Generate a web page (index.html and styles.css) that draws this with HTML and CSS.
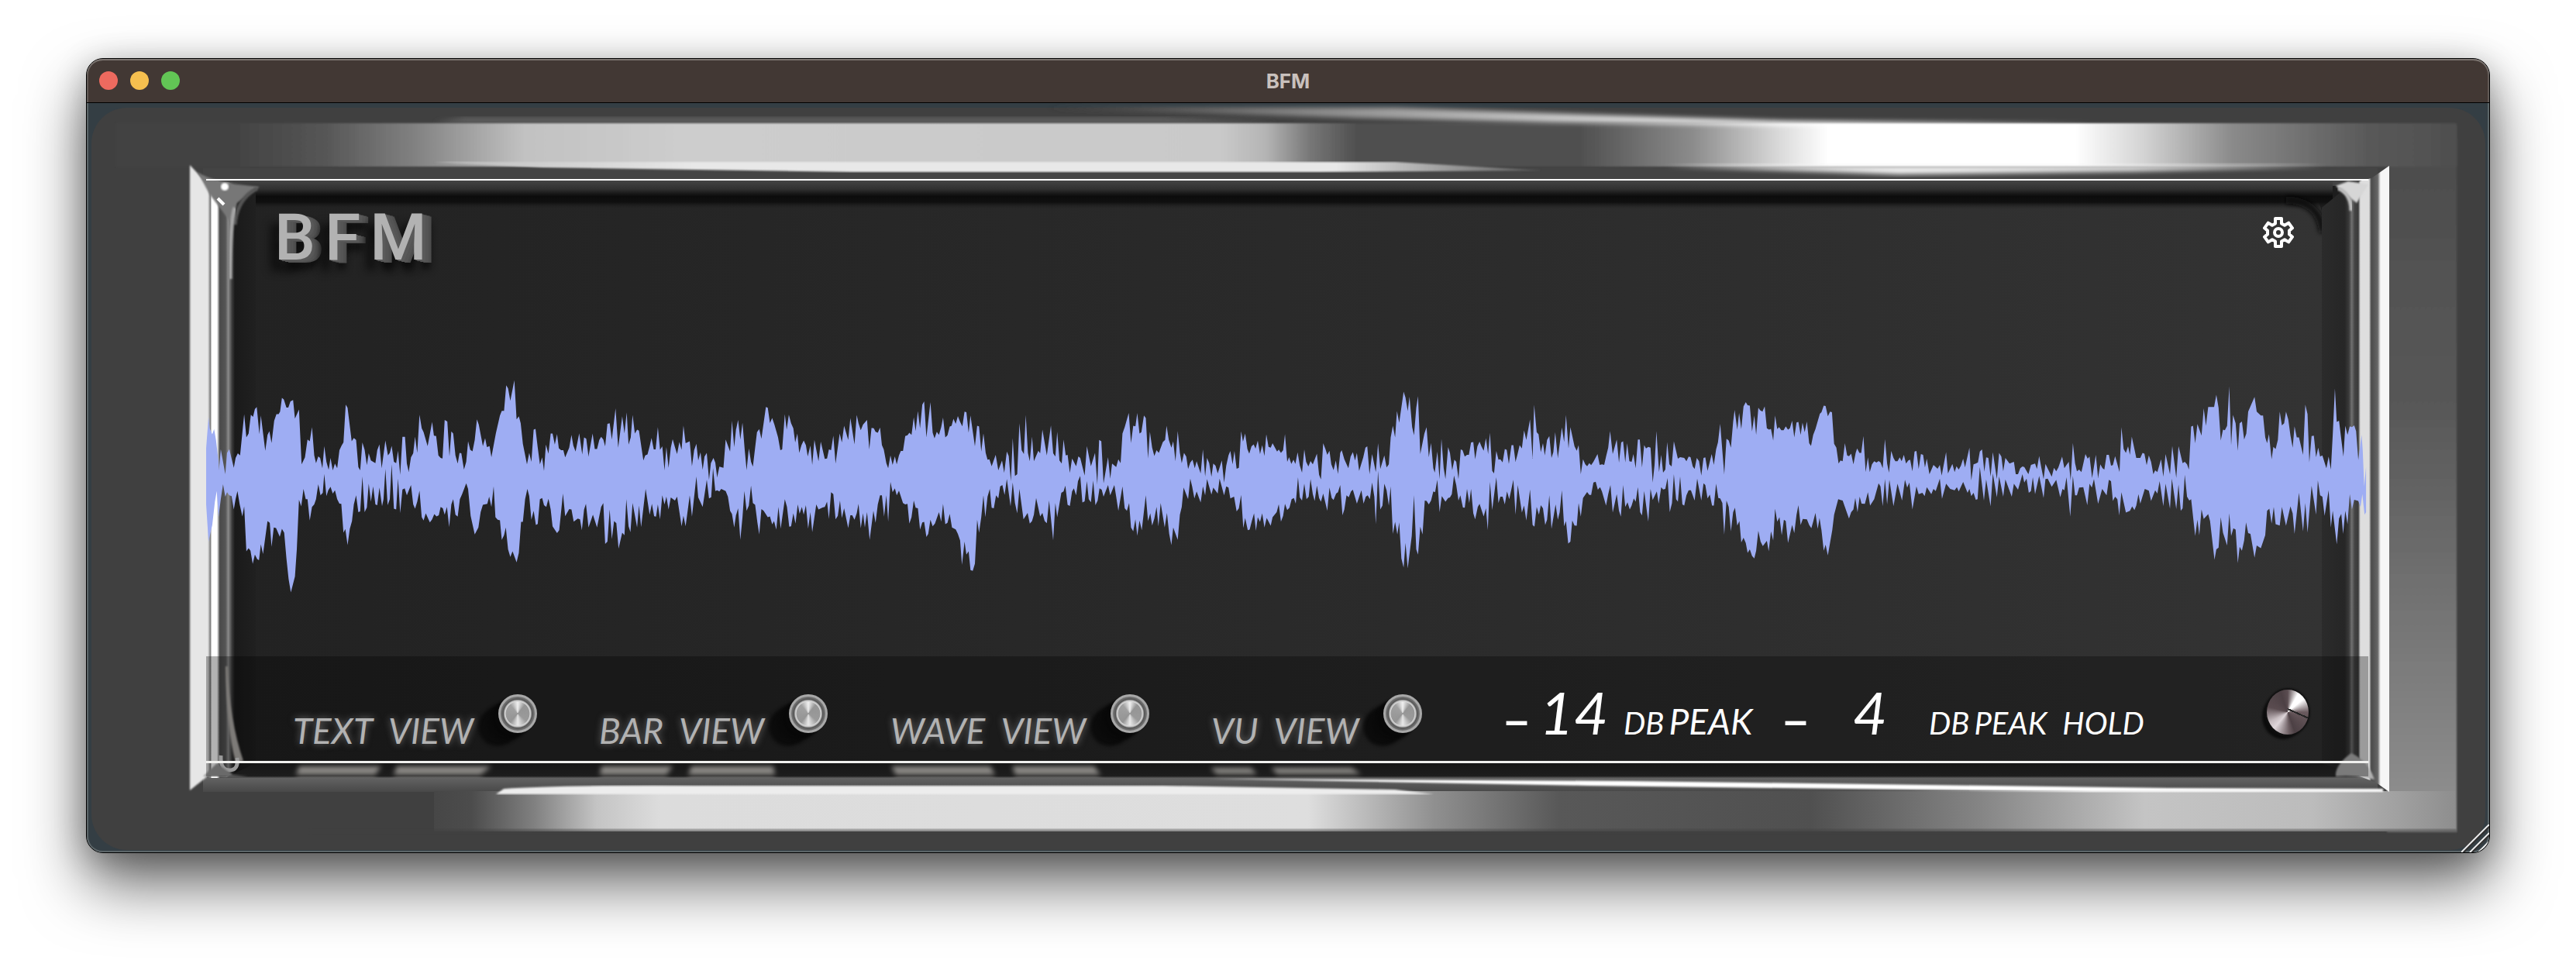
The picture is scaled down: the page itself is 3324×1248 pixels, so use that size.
FILE: index.html
```html
<!DOCTYPE html>
<html lang="en">
<head>
<meta charset="utf-8">
<title>BFM</title>
<link rel="stylesheet" href="styles.css">
</head>
<body>
<main class="window">
  <header class="titlebar">
    <div class="lights">
      <button class="light close" aria-label="Close"></button>
      <button class="light minimise" aria-label="Minimise"></button>
      <button class="light zoom" aria-label="Zoom"></button>
    </div>
    <h1 class="title">BFM</h1>
  </header>

  <div class="body">
    <svg class="bezel" viewBox="112 133 3100 967" preserveAspectRatio="none" aria-hidden="true">
      <defs>
        <linearGradient id="top" gradientUnits="userSpaceOnUse" x1="300" y1="0" x2="3200" y2="0">
          <stop offset="0" stop-color="#424242"/><stop offset=".04" stop-color="#555"/><stop offset=".08" stop-color="#808080"/>
          <stop offset=".13" stop-color="#c2c2c2"/><stop offset=".2" stop-color="#cdcdcd"/><stop offset=".44" stop-color="#c9c9c9"/>
          <stop offset=".46" stop-color="#b4b4b4"/><stop offset=".48" stop-color="#767676"/><stop offset=".5" stop-color="#505050"/>
          <stop offset=".6" stop-color="#505050"/><stop offset=".65" stop-color="#8c8c8c"/><stop offset=".69" stop-color="#ddd"/>
          <stop offset=".71" stop-color="#fff"/><stop offset=".82" stop-color="#fff"/><stop offset=".85" stop-color="#d4d4d4"/>
          <stop offset=".89" stop-color="#8a8a8a"/><stop offset=".95" stop-color="#595959"/><stop offset="1" stop-color="#4c4c4c"/>
        </linearGradient>
        <linearGradient id="bottom" gradientUnits="userSpaceOnUse" x1="500" y1="0" x2="3200" y2="0">
          <stop offset="0" stop-color="#404040"/><stop offset=".04" stop-color="#4c4c4c"/><stop offset=".07" stop-color="#808080"/>
          <stop offset=".1" stop-color="#c4c4c4"/><stop offset=".13" stop-color="#dcdcdc"/><stop offset=".44" stop-color="#dedede"/>
          <stop offset=".5" stop-color="#909090"/><stop offset=".56" stop-color="#585858"/><stop offset=".68" stop-color="#505050"/>
          <stop offset=".76" stop-color="#848484"/><stop offset=".84" stop-color="#c4c4c4"/><stop offset=".92" stop-color="#bcbcbc"/>
          <stop offset="1" stop-color="#868686"/>
        </linearGradient>
        <linearGradient id="side" x1="0" y1="0" x2="0" y2="1">
          <stop offset="0" stop-color="#4c4c4c"/><stop offset=".4" stop-color="#585858"/><stop offset="1" stop-color="#929292"/>
        </linearGradient>
        <linearGradient id="glass" x1="0" y1="0" x2="1" y2="0">
          <stop offset="0" stop-color="#222"/><stop offset=".5" stop-color="#2a2a2a"/><stop offset="1" stop-color="#333"/>
        </linearGradient>
        <linearGradient id="gutter" gradientUnits="userSpaceOnUse" x1="269" y1="0" x2="330" y2="0">
          <stop offset="0" stop-color="#666"/><stop offset=".04" stop-color="#777"/><stop offset=".07" stop-color="#fff"/>
          <stop offset=".18" stop-color="#fff"/><stop offset=".24" stop-color="#4a4a4a"/><stop offset=".36" stop-color="#555"/>
          <stop offset=".42" stop-color="#8a8a8a"/><stop offset=".5" stop-color="#3a3a3a"/><stop offset=".56" stop-color="#1a1a1a"/>
          <stop offset="1" stop-color="#202020"/>
        </linearGradient>
        <linearGradient id="gutterRight" gradientUnits="userSpaceOnUse" x1="2990" y1="0" x2="3083" y2="0">
          <stop offset="0" stop-color="#2c2c2c"/><stop offset=".38" stop-color="#262626"/><stop offset=".44" stop-color="#3a3a3a"/>
          <stop offset=".48" stop-color="#707070"/><stop offset=".52" stop-color="#444"/><stop offset=".57" stop-color="#3a3a3a"/>
          <stop offset=".6" stop-color="#dedede"/><stop offset=".72" stop-color="#dedede"/><stop offset=".75" stop-color="#4a4a4a"/>
          <stop offset=".84" stop-color="#666"/><stop offset=".88" stop-color="#f6f6f6"/><stop offset="1" stop-color="#f6f6f6"/>
        </linearGradient>
        <linearGradient id="lip" gradientUnits="userSpaceOnUse" x1="0" y1="233" x2="0" y2="270">
          <stop offset="0" stop-color="#444"/><stop offset=".3" stop-color="#303030"/><stop offset=".46" stop-color="#181818"/>
          <stop offset=".55" stop-color="#0c0c0c"/><stop offset=".76" stop-color="#101010"/><stop offset="1" stop-color="#242424" stop-opacity="0"/>
        </linearGradient>
        <linearGradient id="streak" gradientUnits="userSpaceOnUse" x1="1350" y1="0" x2="2300" y2="0">
          <stop offset="0" stop-color="#404040"/><stop offset=".35" stop-color="#888"/><stop offset=".8" stop-color="#ddd"/><stop offset="1" stop-color="#fff"/>
        </linearGradient>
        <linearGradient id="sheen" gradientUnits="userSpaceOnUse" x1="620" y1="0" x2="2000" y2="0">
          <stop offset="0" stop-color="#c4c4c4"/><stop offset=".2" stop-color="#e8e8e8"/><stop offset=".8" stop-color="#e8e8e8"/><stop offset="1" stop-color="#555"/>
        </linearGradient>
        <linearGradient id="sill" x1="0" y1="0" x2="0" y2="1">
          <stop offset="0" stop-color="#1f1f1f"/><stop offset=".5" stop-color="#2b2b2b"/><stop offset=".56" stop-color="#626262"/>
          <stop offset="1" stop-color="#484848"/>
        </linearGradient>
        <filter id="soft" x="-5%" y="-30%" width="110%" height="160%"><feGaussianBlur stdDeviation="3"/></filter>
        <filter id="edge" x="-5%" y="-5%" width="110%" height="110%"><feGaussianBlur stdDeviation="1"/></filter>
      </defs>

      <rect x="118" y="139" width="3089" height="958" rx="46" fill="#404040"/>
      <rect x="3080" y="162" width="90" height="912" fill="url(#side)" filter="url(#edge)"/>
      <path d="M600 152H1500L1650 158H560Z" fill="#666" filter="url(#soft)"/>
      <path d="M150 159H3170V215H150Z" fill="url(#top)" filter="url(#edge)"/>
      <path d="M1350 139H1800L2050 148L2300 156L2700 160L2300 162L2000 158L1750 152Z" fill="url(#streak)" filter="url(#soft)"/>

      <rect x="262" y="217" width="2806" height="22" fill="#444"/>
      <path d="M560 209H1800L1990 220L1700 222H1100L700 216Z" fill="url(#sheen)" filter="url(#edge)"/>
      <path d="M2150 214H3000L2750 221L2450 225Z" fill="#f4f4f4" filter="url(#soft)"/>
      <rect x="262" y="982" width="2806" height="40" fill="url(#sill)"/>
      <path d="M560 1021H3168V1073H560Z" fill="url(#bottom)"/>
      <rect x="400" y="1070" width="2770" height="6" fill="#404040" opacity=".5" filter="url(#edge)"/>

      <rect x="290" y="240" width="2750" height="745" fill="#1d1d1d"/>
      <path d="M303 985V290Q303 246 345 246H2966Q2998 250 2998 290V985Z" fill="url(#glass)"/>
      <rect x="300" y="234" width="2710" height="36" fill="url(#lip)"/>
      <path d="M2950 258Q2994 260 2997 300" fill="none" stroke="#101010" stroke-width="9" filter="url(#soft)"/>

      <path d="M650 1018Q720 1013 900 1014H1500L1800 1019L1850 1025H640Z" fill="#ededed" filter="url(#edge)"/>
      <path d="M1560 1005L2100 1008L2800 1017L3075 1018V1022L2700 1022L2050 1014Z" fill="#fff" filter="url(#edge)"/>

      <path d="M269 234H290L330 245V985L290 1004H269Z" fill="url(#gutter)"/>
      <path d="M3083 214L3060 230L3035 236L2996 268V985L3040 1000L3066 1010L3083 1022Z" fill="url(#gutterRight)"/>
      <path d="M245 213L270 240V1000L245 1020Z" fill="#e6e6e6" filter="url(#edge)"/>
      <path d="M255 222Q275 236 335 241L306 262L300 290L270 250Z" fill="#777" filter="url(#edge)"/>
      <path d="M332 243Q306 256 303 290" fill="none" stroke="#555" stroke-width="5" filter="url(#edge)"/>
      <circle cx="290" cy="241" r="5" fill="#fff" filter="url(#edge)"/>
      <path d="M281 256L289 264" stroke="#fff" stroke-width="4"/>
      <path d="M303 268Q297 284 297 360" fill="none" stroke="#a6a6a6" stroke-width="5" filter="url(#edge)"/>
      <path d="M294 860Q296 930 314 982L304 984Q292 940 291 860Z" fill="#b4b0ac" filter="url(#edge)"/>
      <path d="M285 975Q284 994 296 994Q308 994 306 978" fill="none" stroke="#ddd" stroke-width="5"/>
      <path d="M262 1002L280 985L300 1000L320 1002Z" fill="#999" filter="url(#edge)"/>

      <path d="M3014 240L3030 234L3056 238L3041 262Z" fill="#d6d6d6" filter="url(#edge)"/>
      <path d="M3017 243Q3034 250 3034 272" fill="none" stroke="#bbb" stroke-width="5" filter="url(#edge)"/>
      <path d="M3014 998Q3016 985 3034 972Q3056 982 3064 1006Q3040 1000 3014 1002Z" fill="#b0b0b0" filter="url(#edge)"/>

      <g fill="#c8c5c0" filter="url(#soft)">
        <path d="M386 989H492L484 1000H382Z"/><path d="M512 989H634L620 1000H508Z"/>
        <path d="M776 989H868L860 1000H774Z"/><path d="M892 989H998L1000 1000H888Z"/>
        <path d="M1150 989H1278L1284 1000H1156Z"/><path d="M1306 989H1412L1420 1000H1310Z"/>
        <path d="M1562 991H1614L1622 999H1570Z"/><path d="M1640 991H1744L1756 999H1648Z"/>
      </g>
    </svg>

    <section class="screen">
      <div class="display">
        <div class="brand"><span>B</span><span>F</span><span>M</span></div>
        <button class="settings" aria-label="Settings">
          <svg viewBox="0 0 40 40" class="gear" aria-hidden="true">
            <path d="M16 2H24V8.500L28 10.800L33.200 7.600L38 14.300L34 17.600V22.400L38 25.700L33.200 32.400L28 29.200L24 31.500V38H16V31.500L12 29.200L6.800 32.400L2 25.700L6 22.400V17.600L2 14.300L6.800 7.600L12 10.800L16 8.500Z"/>
            <circle cx="20" cy="20" r="5"/>
          </svg>
        </button>
      </div>
      <svg class="wave" viewBox="0 0 2790 771" preserveAspectRatio="none" role="img" aria-label="Waveform"></svg>
      <footer class="footer">
        <div class="controls">
          <button class="view"><span class="label"><span>TEXT</span><span>VIEW</span></span><span class="cap"></span></button>
          <button class="view"><span class="label"><span>BAR</span><span>VIEW</span></span><span class="cap"></span></button>
          <button class="view"><span class="label"><span>WAVE</span><span>VIEW</span></span><span class="cap"></span></button>
          <button class="view"><span class="label"><span>VU</span><span>VIEW</span></span><span class="cap"></span></button>
          <output class="reading"><span class="sign">–</span><span class="number">14</span><span class="unit">DB</span><span class="word">PEAK</span></output>
          <output class="reading hold"><span class="sign">–</span><span class="number">4</span><span class="unit">DB</span><span class="word">PEAK</span><span class="word last">HOLD</span></output>
          <button class="dial" aria-label="Gain"></button>
        </div>
      </footer>
    </section>

    <svg class="grip" viewBox="0 0 36 36" aria-hidden="true">
      <path d="M0 36L36 0M11 36L36 11M22 36L36 22" stroke="#eee" stroke-width="2"/>
      <path d="M3 36L36 3M14 36L36 14" stroke="#333" stroke-width="2"/>
    </svg>
  </div>
</main>
<script src="wave.js"></script>
</body>
</html>
```
FILE: styles.css
```css
* { box-sizing: border-box; }

body {
  margin: 0;
  min-height: 100vh;
  padding: 75px 111px 147px;
  background: #fff;
  font-family: Lato, "Liberation Sans", Arial, sans-serif;
  overflow: hidden;
}

button {
  padding: 0;
  border: 0;
  background: none;
  font: inherit;
  color: inherit;
}

.window {
  display: flex;
  flex-direction: column;
  min-height: calc(100vh - 222px);
  border: 1px solid #000;
  border-radius: 22px;
  background: #343e44;
  box-shadow: 0 40px 80px rgba(0, 0, 0, .6), 0 8px 40px rgba(0, 0, 0, .24);
}

.titlebar {
  display: grid;
  grid-template-columns: 1fr auto 1fr;
  align-items: center;
  height: 57px;
  padding: 0 16px;
  border-bottom: 1px solid #000;
  border-radius: 21px 21px 0 0;
  background: #423834;
  box-shadow: inset 0 2px 0 #7c7571, inset 2px 0 0 #625a56, inset -2px 0 0 #625a56;
}

.lights { display: flex; gap: 16px; }

.light {
  width: 24px;
  height: 24px;
  border-radius: 50%;
}

.close { background: #ed6a5f; }
.minimise { background: #f5bf4f; }
.zoom { background: #62c555; }

.title {
  margin: 0;
  font: bold 26px Inter, "Liberation Sans", sans-serif;
  color: #c9c1bd;
}

.body {
  position: relative;
  flex: 1;
  display: grid;
  border-radius: 0 0 21px 21px;
  overflow: hidden;
  box-shadow: inset 0 -2px 0 #5c6568, inset 2px 0 0 #5c6568, inset -2px 0 0 #5c6568;
}

.bezel,
.screen { grid-area: 1 / 1; }

.bezel {
  width: 100%;
  height: 100%;
  min-height: 0;
  contain: size;
}

.screen {
  position: relative;
  display: flex;
  flex-direction: column;
  margin: 98px 156px 98px 154px;
  border-top: 2px solid #fff;
}

.display {
  flex: 1;
  display: flex;
  justify-content: space-between;
  align-items: flex-start;
  padding: 24px 96px 0 88px;
}

.brand {
  display: flex;
  gap: 12px;
  font-family: Roboto, "Liberation Sans", sans-serif;
  font-size: 84px;
  line-height: 100px;
  font-weight: 500;
  color: #b2b2b2;
  text-shadow: 2px 1px #5a5a5a, 4px 2px #5a5a5a, 6px 2px #555, 8px 3px #555, 10px 3px #505050, 12px 4px #4c4c4c,
    -10px 14px 12px #0c0c0c, 10px 12px 10px #0c0c0c;
}

.settings {
  width: 40px;
  height: 40px;
  margin-top: 23px;
}

.gear {
  display: block;
  width: 40px;
  height: 40px;
  fill: none;
  stroke: #fff;
  stroke-width: 4;
  stroke-linejoin: round;
}

/* The trace spans the whole screen and lies over the display. */
.wave {
  position: absolute;
  inset: 0;
  width: 100%;
  height: 100%;
  fill: #9eadf3;
  pointer-events: none;
}

.footer {
  position: relative;
  height: 155px;
  padding-bottom: 17px;
  background: rgba(0, 0, 0, .3);
}

.controls {
  display: grid;
  grid-template-columns: 395fr 376fr 414fr 379fr 360fr 623fr 131fr;
  height: 100%;
  padding-left: 112px;
  border-bottom: 3px solid #f0f0ee;
}

.view {
  display: flex;
  align-items: flex-start;
  gap: 32px;
  text-align: left;
}

.label {
  display: flex;
  gap: 20px;
  padding-top: 68px;
  font-size: 46px;
  line-height: 56px;
  font-style: italic;
  color: #b2b2b2;
  text-shadow: 0 0 10px rgba(200, 200, 200, .5);
}

.cap {
  width: 50px;
  height: 50px;
  margin-top: 49px;
  border: 3px solid #a8a8a8;
  border-radius: 50%;
  background:
    radial-gradient(circle closest-side, transparent 68%, #d8d8d8 72%, #b8b8b8 78%, #555 84%, #7a7a7a 100%),
    conic-gradient(#f0f0f0, #959595 40deg, #9a9a9a 130deg, #e8e8e8 180deg, #959595 220deg, #a0a0a0 320deg, #f0f0f0);
  box-shadow: -8px 6px 3px #080808, -16px 11px 4px #0a0a0a, -26px 17px 4px #0c0c0c;
}

.reading {
  display: flex;
  align-items: baseline;
  align-self: start;
  padding-top: 24px;
  line-height: 96px;
  font-style: italic;
  color: #fff;
}

.sign {
  width: 29px;
  font-family: "Liberation Sans", Arial, sans-serif;
  font-size: 54px;
  font-style: normal;
  font-weight: bold;
}

.number { width: 104px; font-size: 76px; text-align: right; }
.unit { margin-left: 20px; font-size: 40px; }
.word { margin-left: 6px; font-size: 46px; }
.hold .unit { margin-left: 54px; }
.hold .word { font-size: 40px; }
.hold .last { margin-left: 20px; }

.dial {
  width: 54px;
  height: 58px;
  margin-top: 43px;
  border-radius: 50%;
  background:
    linear-gradient(24deg, transparent 46%, #262626 46%, #262626 54%, transparent 54%) 27px 23px / 27px 16px no-repeat,
    conic-gradient(#5a4c50, #fff 30deg, #fff 50deg, #6a5a5e 90deg, #4c4044 160deg, #6a5c60 175deg, #ded6da 220deg, #c8bec2 240deg, #5a4c50 285deg, #4c4044 340deg, #5a4c50);
  box-shadow: 0 0 2px 2px #111, -6px 6px 3px #0c0c0c;
}

.grip {
  position: absolute;
  right: 0;
  bottom: 0;
  width: 36px;
  height: 36px;
}
```
FILE: wave.js
```js
// Upper and lower envelope of the signal, in four consecutive stretches.
const segments = [
  {
    top: "33,300 40,172 43,215 50,238 55,218 60,260 67,345 68,378 73,296 85,393 90,310 96,296 108,368 113,330 119,312 125,320 136,160 142,250 148,235 154,162 160,170 165,140 170,132 177,237 181,165 193,302 199,240 204,226 210,272 217,185 223,160 229,160 233,150 238,97 243,103 250,134 255,134 261,110 268,105 273,177 284,142 291,355 300,328 307,258 313,265 319,210 325,320 330,350 336,324 341,330 347,370 352,284 358,345 364,376 369,330 375,378 381,352 387,370 393,300 399,282 404,270 410,123 415,135 426,265 432,252 438,260 444,365 449,378 455,270 461,298 467,358 472,312 478,340 490,350 495,300 501,277 507,370 517,262 524,320 529,310 534,283 540,345 546,350 551,302 557,395 563,248 570,248 575,352 580,384 586,328 592,312 597,247 603,310 609,162 615,215 620,230 631,284 643,190 648,243 654,245 660,320 666,330 671,332 677,182 684,188 690,324 695,227 700,235 706,320 712,352 717,310 722,312 729,375 735,345 740,265 746,298 752,304 758,260 764,180 769,200 780,284 786,253 791,288 798,284 803,327 815,235 826,165 831,147 837,147 843,48 848,60 854,108 865,28 871,180 877,168 882,195 888,275 899,355 905,310 911,345 917,220 922,217 928,290 934,355 940,328 945,380 950,278 957,313 963,235 968,235 974,278 980,237 985,292 991,300 997,300 1002,328 1013,290 1019,240 1024,282 1030,305 1040,234 1048,316 1053,250 1059,255 1065,324 1076,235 1082,295 1088,295 1094,260 1099,248 1105,258 1110,285 1116,197 1122,195 1128,258 1138,137 1145,290 1156,168 1162,234 1168,153 1173,278 1179,250 1184,163 1190,235 1196,220 1201,224 1213,340 1218,320 1224,316 1230,285 1235,252 1241,297 1246,297 1252,210 1258,298 1264,285 1270,378 1275,288 1281,368 1287,290 1292,257 1298,288 1304,315 1310,268 1316,298 1321,204 1327,273 1338,265 1344,362 1350,300 1356,275 1361,340 1367,308 1373,376 1378,325 1384,310 1390,415 1395,350 1402,330 1407,348 1412,405 1418,364 1429,368 1435,258 1447,305 1452,185 1458,288 1463,217",
    bottom: "33,500 40,655 50,590 57,500 62,458 67,560 73,490 79,432 85,480 90,463 96,475 102,478 108,530 113,490 118,458 124,510 131,557 136,518 142,692 148,680 153,690 159,741 165,705 171,722 176,727 181,665 187,703 199,575 205,582 210,675 216,600 222,602 232,636 238,605 244,620 250,720 256,800 262,852 273,790 278,685 284,492 290,518 296,450 302,490 307,490 313,573 319,520 325,510 330,490 336,432 342,475 348,465 352,392 358,478 363,455 369,442 375,468 381,455 387,490 393,507 398,508 404,620 409,606 415,668 421,605 427,575 432,510 438,475 444,540 449,537 455,402 461,540 467,522 472,430 478,500 484,440 490,510 495,513 501,445 508,517 512,490 517,373 523,513 529,490 534,355 540,527 546,530 551,410 557,544 563,452 569,448 575,475 586,435 592,510 597,527 603,500 609,457 615,560 620,573 626,545 637,580 643,568 649,548 655,557 661,552 666,520 672,525 677,550 683,520 689,598 695,510 700,490 706,550 712,558 718,490 724,470 735,428 740,450 747,555 758,627 768,600 774,540 780,512 792,508 797,480 803,520 809,440 814,560 820,570 826,572 831,648 837,630 842,600 848,685 854,714 860,692 871,735 877,698 883,578 888,578 894,490 900,450 905,478 911,570 917,535 923,590 928,586 934,490 940,485 945,513 951,520 957,488 963,530 968,595 980,622 986,610 996,468 1002,556 1013,528 1019,530 1025,577 1036,565 1042,568 1047,610 1053,530 1058,508 1065,600 1077,550 1088,600 1099,520 1105,505 1110,664 1116,655 1122,530 1128,645 1134,575 1140,583 1146,682 1156,620 1162,630 1167,490 1173,595 1178,618 1184,505 1196,600 1201,515 1207,598 1219,450 1230,550 1236,508 1242,556 1247,558 1252,510 1258,568 1264,475 1270,510 1275,480 1281,530 1287,483 1298,495 1304,480 1316,595 1321,555 1327,595 1338,475 1344,558 1356,402 1361,483 1373,520 1384,415 1390,487 1396,482 1401,370 1407,458 1412,455 1418,460 1423,450 1435,458 1441,480 1447,535 1452,547 1458,600 1463,550"
  },
  {
    top: "0,217 5,182 11,258 17,193 23,300 28,377 34,293 40,345 45,364 51,290 56,230 62,218 68,255 80,132 85,135 91,194 97,175 103,200 113,250 119,300 124,297 131,160 136,220 142,162 148,195 154,215 159,270 165,235 170,310 176,280 182,262 188,280 193,324 200,282 205,357 211,260 222,343 228,267 239,334 245,332 250,297 256,300 262,243 268,352 279,235 285,270 291,205 302,260 308,175 319,277 325,163 330,195 336,222 342,200 353,182 359,297 365,213 371,215 376,228 382,232 388,212 393,280 398,297 405,350 410,370 416,320 422,357 428,324 433,355 439,320 444,303 450,303 456,245 462,242 467,232 473,240 479,172 484,225 490,148 496,215 502,123 507,110 513,250 524,113 530,232 535,254 541,228 547,240 553,210 558,173 564,250 570,242 576,208 581,205 586,178 592,197 598,167 604,190 610,207 616,150 621,152 627,232 632,165 644,285 650,205 655,207 661,305 667,234 673,310 678,337 683,335 689,362 700,318 707,378 717,340 723,388 730,305 735,322 741,420 746,252 752,400 758,393 764,195 770,300 776,315 781,163 787,310 792,343 798,247 803,343 815,302 820,312 826,220 838,320 849,203 855,312 861,325 866,228 872,340 878,352 883,258 889,320 894,318 900,388 906,332 917,362 923,324 928,330 940,398 946,284 957,362 968,310 974,432 979,260 985,265 991,428 1003,327 1009,410 1014,352 1025,365 1031,335 1037,350 1042,235 1048,210 1059,155 1065,272 1071,205 1077,207 1082,155 1088,235 1093,230 1100,165 1105,175 1111,332 1116,228 1122,290 1128,322 1134,300 1140,310 1151,268 1157,260 1161,205 1167,260 1174,290 1179,265 1185,343 1191,225 1197,310 1202,350 1208,310 1214,325 1219,373 1225,348 1231,337 1237,370 1242,343 1253,390 1259,297 1265,402 1270,330 1276,350 1282,403 1287,352 1293,360 1299,390 1310,340 1316,425 1322,360 1328,320 1333,303 1339,355 1344,303 1350,372 1356,368 1362,226 1367,267 1373,235 1379,295 1384,313 1390,285 1396,277 1401,294 1407,263 1413,315 1419,280 1425,322 1430,238 1436,287 1442,290 1447,273 1459,305 1464,297",
    bottom: "0,550 5,525 11,648 17,560 22,458 28,535 34,515 40,437 45,505 51,512 57,580 62,627 68,528 74,535 85,560 91,557 97,588 102,575 108,608 114,520 120,604 131,490 137,520 143,597 148,595 154,545 160,585 166,510 171,546 177,520 182,550 188,513 194,604 200,540 205,618 216,510 222,530 233,522 239,520 245,500 250,567 256,463 262,470 268,568 274,555 280,495 285,563 291,525 302,602 308,552 313,552 319,570 325,545 330,508 336,603 342,545 347,600 353,540 360,648 370,535 376,582 382,510 388,475 393,475 399,558 405,475 410,577 416,423 422,463 428,448 433,475 439,457 450,505 456,510 462,508 467,585 473,560 479,495 484,523 490,525 496,608 502,580 507,578 513,637 518,625 524,570 530,595 536,585 547,540 553,577 558,508 564,587 570,582 576,547 582,600 592,607 598,625 604,650 609,745 616,655 621,705 627,692 632,765 638,768 644,740 650,570 655,620 661,560 667,475 672,560 678,480 684,450 689,523 695,525 701,475 707,487 712,440 718,435 724,473 730,412 740,518 746,425 752,505 758,545 764,450 775,568 786,543 792,585 798,575 803,550 809,485 820,557 826,543 832,575 838,583 844,495 855,650 861,505 866,560 877,465 883,460 888,437 894,512 900,516 906,460 911,448 917,475 922,420 928,400 934,503 940,498 946,420 951,490 957,502 963,418 969,513 975,495 980,448 986,453 991,480 1003,435 1009,475 1020,435 1025,480 1031,535 1042,440 1048,525 1054,535 1060,505 1065,600 1071,615 1077,568 1082,632 1088,573 1094,610 1105,475 1111,575 1117,545 1122,592 1128,565 1134,520 1139,595 1145,505 1156,600 1162,543 1168,625 1174,668 1179,600 1191,648 1197,550 1202,520 1207,445 1219,490 1225,410 1230,440 1236,487 1242,460 1253,503 1259,440 1265,475 1270,412 1282,472 1287,445 1299,468 1304,410 1316,475 1322,440 1328,445 1333,487 1343,480 1350,537 1356,525 1362,473 1368,602 1373,563 1380,610 1385,608 1391,575 1397,545 1402,613 1407,560 1413,578 1419,545 1425,600 1431,563 1442,593 1447,560 1458,540 1464,507"
  },
  {
    top: "0,297 6,310 12,300 17,237 23,345 28,327 34,353 40,337 45,353 51,308 57,360 63,387 69,297 74,345 80,363 86,342 92,355 103,313 109,395 114,413 120,273 126,295 131,318 137,302 142,355 148,377 154,340 160,392 166,310 170,300 177,335 188,370 194,325 200,307 206,340 211,310 217,380 228,328 234,290 239,285 245,393 252,315 262,385 268,273 274,373 285,320 291,367 297,355 302,250 308,205 314,250 319,148 325,193 337,73 342,95 348,148 353,92 360,210 365,242 371,135 376,90 382,315 393,235 399,210 405,327 411,272 417,370 421,387 428,305 434,412 439,255 445,370 450,412 457,288 462,310 468,377 474,337 479,345 485,412 491,297 496,300 502,325 508,318 513,318 519,270 525,268 530,335 536,285 542,267 547,285 553,302 559,253 565,315 570,232 576,380 581,390 587,303 593,337 598,335 604,347 610,295 615,298 621,353 628,280 633,280 639,345 644,318 650,280 656,293 662,223 668,260 678,180 685,333 689,123 696,230 701,238 707,307 713,273 718,320 724,260 730,245 736,330 741,307 746,230 753,330 764,212 770,268 775,163 782,293 787,210 798,285 804,302 809,280 815,393 821,335 827,355 832,362 838,350 843,358 849,345 860,315 866,357 872,355 878,357 883,325 889,290 894,225 901,315 912,258 918,348 924,270 929,265 935,347 940,273 946,343 952,345 957,315 963,370 969,258 974,258 980,367 986,280 991,293 997,287 1003,290 1009,425 1014,357 1019,225 1026,385 1032,318 1037,387 1043,375 1048,268 1054,355 1060,363 1066,265 1077,333 1083,327 1094,330 1100,343 1106,325 1111,327 1117,363 1122,373 1128,330 1134,343 1140,398 1146,330 1151,328 1157,380 1168,315 1174,357 1180,297 1185,270 1191,197 1202,393 1208,255 1214,262 1220,290 1226,190 1230,143 1237,220 1242,155 1248,218 1254,130 1260,113 1265,125 1271,127 1277,227 1283,165 1288,240 1294,135 1299,145 1305,150 1311,130 1317,215 1323,220 1328,217 1334,262 1339,165 1345,218 1350,210 1356,222 1362,222 1368,207 1374,220 1379,215 1385,185 1391,250 1397,192 1402,190 1408,240 1413,193 1419,230 1425,188 1431,273 1436,283 1442,240 1448,218 1460,158 1464,152",
    bottom: "0,507 6,577 12,555 17,508 23,532 29,523 35,490 41,485 46,507 52,405 57,483 63,495 69,430 75,490 81,480 86,412 92,470 97,497 103,437 109,485 114,500 120,468 131,535 137,445 143,485 148,493 155,468 160,463 166,435 172,552 177,530 183,475 189,482 195,460 200,453 211,507 223,455 229,507 235,480 240,475 246,490 252,425 258,480 262,587 268,380 274,530 280,515 285,430 291,455 297,515 302,440 308,625 314,578 320,627 325,580 331,720 337,755 342,660 348,758 359,632 365,475 371,685 376,705 382,597 388,627 394,495 399,497 405,510 411,495 417,460 422,463 428,415 434,540 440,478 450,500 457,485 462,483 467,470 473,398 479,435 485,495 490,475 497,522 502,523 508,450 514,505 519,450 525,545 530,568 537,520 542,508 548,535 553,557 559,525 564,610 570,423 576,532 587,405 593,505 598,480 604,480 610,510 616,460 622,490 633,415 639,550 645,435 656,542 662,515 668,573 678,452 685,590 690,597 696,520 702,550 707,513 713,525 719,590 724,570 730,475 736,605 747,510 753,570 758,540 764,455 770,595 775,575 781,662 787,655 792,573 798,592 804,593 809,505 815,558 821,485 832,462 838,473 843,473 849,425 855,422 861,453 867,443 872,460 883,515 889,470 895,435 901,542 912,470 918,535 923,558 929,435 935,520 941,502 947,530 952,515 958,487 963,500 969,443 975,540 980,553 986,458 997,577 1003,450 1009,493 1020,460 1025,507 1032,443 1037,452 1043,450 1049,408 1055,540 1061,505 1066,393 1072,490 1077,500 1083,402 1089,510 1094,515 1100,475 1106,455 1112,455 1122,495 1129,410 1140,495 1146,428 1151,435 1157,487 1163,472 1169,515 1174,515 1180,430 1186,485 1191,487 1197,505 1202,628 1208,495 1214,520 1220,615 1226,540 1231,523 1237,592 1243,575 1248,658 1254,640 1260,660 1265,698 1271,685 1277,710 1283,720 1288,690 1294,613 1300,655 1306,672 1317,652 1322,692 1328,615 1334,650 1339,527 1345,577 1351,560 1357,630 1363,570 1368,575 1374,660 1385,590 1391,622 1397,550 1402,513 1408,590 1414,567 1425,568 1431,590 1437,603 1442,577 1448,543 1454,605 1459,563 1464,610"
  },
  {
    top: "0,155 7,127 12,128 18,168 24,150 29,152 35,275 41,290 47,352 52,340 58,343 64,273 70,320 75,323 81,313 87,355 93,310 97,293 103,310 108,310 114,245 120,385 126,328 131,385 137,355 143,343 149,348 155,342 160,347 166,370 172,257 178,352 183,387 189,303 195,330 200,343 206,343 212,328 217,343 223,318 229,352 235,340 240,337 246,382 252,305 257,303 263,373 269,315 275,318 280,367 285,333 292,393 303,357 314,372 320,357 325,398 337,307 342,390 354,353 360,385 365,362 371,375 377,360 383,333 388,367 400,290 405,417 411,355 417,352 423,347 428,305 434,297 440,383 445,328 451,330 457,402 463,307 474,412 480,310 486,325 491,382 497,330 508,352 520,345 525,393 531,393 537,370 543,363 548,365 559,393 566,357 577,352 582,373 588,322 594,368 600,412 605,353 622,403 628,368 634,382 640,367 650,325 656,370 662,357 668,345 673,417 679,272 685,350 690,382 696,375 702,385 713,315 719,333 724,325 731,408 741,318 747,408 753,355 759,370 764,375 770,318 776,318 782,360 787,358 793,323 805,385 810,210 816,295 822,310 828,285 833,318 838,247 850,330 856,330 861,330 867,310 872,313 878,358 884,320 890,345 896,393 901,378 907,385 917,335 923,403 929,315 941,393 947,283 958,407 964,284 975,350 981,345 987,355 992,375 998,208 1003,205 1009,273 1015,198 1026,243 1032,137 1038,205 1044,132 1060,132 1066,85 1072,135 1078,262 1084,220 1089,222 1095,205 1101,52 1106,280 1111,163 1118,195 1124,302 1129,195 1135,188 1141,258 1147,235 1152,150 1158,130 1169,93 1175,150 1186,165 1192,165 1198,250 1203,273 1208,237 1215,335 1220,287 1226,295 1232,260 1237,150 1243,203 1249,195 1254,150 1260,180 1266,242 1272,290 1277,207 1283,250 1289,250 1300,318 1306,123 1312,160 1317,347 1323,245 1329,243 1335,327 1341,290 1346,325 1352,320 1363,370 1369,325 1375,375 1380,240 1386,60 1391,190 1397,185 1409,325 1414,205 1420,240 1426,207 1432,210 1438,203 1443,225 1449,338 1458,240 1461,300 1465,440 1470,365",
    bottom: "0,600 7,690 12,667 18,708 30,610 35,550 46,490 52,493 58,495 75,565 81,540 87,530 92,485 98,540 104,480 109,507 118,508 126,463 132,515 143,490 155,428 160,440 166,517 172,412 178,510 184,415 195,517 206,430 218,495 226,415 232,445 238,425 246,530 257,440 263,470 273,465 279,478 285,443 297,470 303,450 309,458 320,410 326,488 337,430 348,450 360,455 366,443 371,460 383,423 395,465 400,450 405,478 411,465 417,492 422,490 428,365 439,495 445,413 457,518 463,390 474,482 480,402 491,480 497,413 514,480 520,430 531,453 543,393 548,425 554,410 560,465 566,458 571,405 577,470 588,400 600,485 605,412 611,410 622,442 634,415 645,482 651,450 656,455 662,405 672,558 679,400 685,475 690,475 696,445 707,443 718,513 724,430 730,445 736,412 747,508 758,450 770,475 776,415 782,420 787,497 793,480 799,490 804,553 810,463 822,542 833,535 839,518 845,532 850,515 856,470 861,507 873,450 884,457 890,497 901,455 907,468 913,420 923,517 929,430 941,527 946,410 958,528 964,433 970,535 975,525 981,395 987,480 993,495 998,490 1009,633 1015,570 1020,630 1026,530 1032,567 1044,548 1049,575 1061,725 1066,685 1072,678 1078,560 1084,620 1095,670 1101,545 1106,633 1112,603 1118,608 1124,738 1129,675 1135,690 1141,650 1146,580 1152,622 1158,625 1169,717 1175,670 1186,680 1198,630 1203,535 1209,527 1215,585 1221,520 1226,587 1237,592 1243,520 1254,593 1266,518 1272,545 1277,625 1289,465 1300,615 1306,505 1312,620 1323,438 1335,550 1340,417 1346,475 1352,480 1358,555 1369,455 1375,600 1380,535 1391,665 1397,565 1403,547 1408,625 1414,535 1420,587 1426,470 1432,530 1438,492 1449,497 1455,520 1460,470 1466,550 1470,540"
  }
];

const STEP_X = 750 / 1568;
const STEP_Y = 1 / 3;
const points = (text, index) => text.split(" ").map(pair => {
  const [x, y] = pair.split(",").map(Number);
  return [x * STEP_X + index * 700 - 16, y * STEP_Y + 249];
});
const upper = segments.flatMap((s, i) => points(s.top, i));
const lower = segments.flatMap((s, i) => points(s.bottom, i)).reverse();
const shape = document.createElementNS("http://www.w3.org/2000/svg", "polygon");
shape.setAttribute("points", [...upper, ...lower].map(p => p.map(n => n.toFixed(1)).join(",")).join(" "));
document.querySelector(".wave").append(shape);
```
